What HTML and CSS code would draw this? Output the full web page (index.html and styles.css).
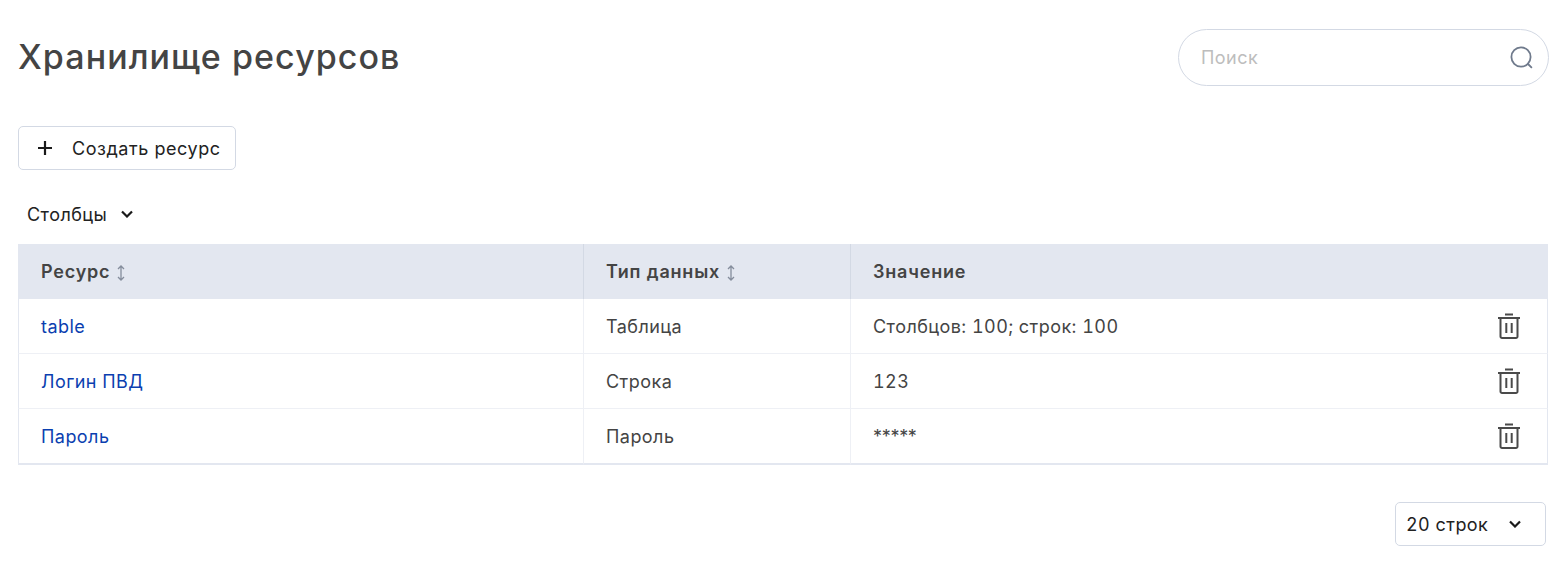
FILE: index.html
```html
<!DOCTYPE html>
<html lang="ru">
<head>
    <meta charset="UTF-8">
    <title>Хранилище ресурсов</title>
    <link rel="stylesheet" href="styles.css">
</head>
<body>
    <header class="page-header">
        <h1>Хранилище ресурсов</h1>
        <div class="search">
            <span class="search-placeholder">Поиск</span>
            <svg class="search-icon" width="26" height="26" viewBox="0 0 26 26" fill="none" stroke="#6f7a8c" stroke-width="1.8" stroke-linecap="round">
                <circle cx="12" cy="12" r="9.6"/>
                <path d="M19 19l3.4 3.4"/>
            </svg>
        </div>
    </header>

    <button class="create-btn">
        <svg width="16" height="16" viewBox="0 0 16 16" stroke="#1a1a1a" stroke-width="2.2">
            <path d="M8 1v14M1 8h14"/>
        </svg>
        <span>Создать ресурс</span>
    </button>

    <div class="columns-toggle">
        <span>Столбцы</span>
        <svg class="chevron" width="12" height="8" viewBox="0 0 12 8" fill="none" stroke="#1a1a1a" stroke-width="2.2">
            <path d="M1 1.500L6 6.500l5-5"/>
        </svg>
    </div>

    <table class="resources">
        <thead>
            <tr>
                <th class="col-name">Ресурс
                    <svg class="sort" width="10" height="16" viewBox="0 0 10 16" fill="none" stroke="#858d9c" stroke-width="1.300"><path d="M5 1v14M2 4l3-3 3 3M2 12l3 3 3-3"/></svg>
                </th>
                <th class="col-type">Тип данных
                    <svg class="sort" width="10" height="16" viewBox="0 0 10 16" fill="none" stroke="#858d9c" stroke-width="1.300"><path d="M5 1v14M2 4l3-3 3 3M2 12l3 3 3-3"/></svg>
                </th>
                <th>Значение</th>
            </tr>
        </thead>
        <tbody>
            <tr>
                <td><a href="#">table</a></td>
                <td>Таблица</td>
                <td>
                    <div class="value-cell">
                        <span>Столбцов: 100; строк: 100</span>
                        <svg class="trash" width="22" height="26" viewBox="0 0 22 26" fill="none" stroke="#4a4a4a" stroke-width="2"><path d="M7 1.500h8M0 5h22M2.500 5v18.500a1.500 1.500 0 0 0 1.500 1.500h14a1.500 1.500 0 0 0 1.500-1.500V5M8.300 10v10M13.700 10v10"/></svg>
                    </div>
                </td>
            </tr>
            <tr>
                <td><a href="#">Логин ПВД</a></td>
                <td>Строка</td>
                <td>
                    <div class="value-cell">
                        <span>123</span>
                        <svg class="trash" width="22" height="26" viewBox="0 0 22 26" fill="none" stroke="#4a4a4a" stroke-width="2"><path d="M7 1.500h8M0 5h22M2.500 5v18.500a1.500 1.500 0 0 0 1.500 1.500h14a1.500 1.500 0 0 0 1.500-1.500V5M8.300 10v10M13.700 10v10"/></svg>
                    </div>
                </td>
            </tr>
            <tr>
                <td><a href="#">Пароль</a></td>
                <td>Пароль</td>
                <td>
                    <div class="value-cell">
                        <span class="masked">*****</span>
                        <svg class="trash" width="22" height="26" viewBox="0 0 22 26" fill="none" stroke="#4a4a4a" stroke-width="2"><path d="M7 1.500h8M0 5h22M2.500 5v18.500a1.500 1.500 0 0 0 1.500 1.500h14a1.500 1.500 0 0 0 1.500-1.500V5M8.300 10v10M13.700 10v10"/></svg>
                    </div>
                </td>
            </tr>
        </tbody>
    </table>

    <div class="pager">
        <div class="rows-select">
            <span>20 строк</span>
            <svg class="chevron" width="12" height="8" viewBox="0 0 12 8" fill="none" stroke="#1a1a1a" stroke-width="2.2">
                <path d="M1 1.500L6 6.500l5-5"/>
            </svg>
        </div>
    </div>
</body>
</html>
```

FILE: styles.css
```css
body {
    margin: 0;
    padding: 29px 14px 0 18px;
    font-family: Inter, 'Noto Sans', sans-serif;
    font-size: 18px;
    letter-spacing: 0.45px;
    font-variant-numeric: tabular-nums;
    color: #444444;
    background-color: #ffffff;
}

.page-header {
    display: flex;
    justify-content: space-between;
    align-items: center;
    height: 57px;
}

h1 {
    margin: 0 0 2px;
    font-size: 34px;
    font-weight: 500;
    letter-spacing: 1.05px;
    color: #444444;
}

.search {
    display: flex;
    justify-content: space-between;
    align-items: center;
    box-sizing: border-box;
    width: 371px;
    height: 57px;
    padding: 0 13px 0 22px;
    border: 1px solid #d3d9e4;
    border-radius: 29px;
}

.search-placeholder {
    color: #bdbdbd;
}

.create-btn {
    display: flex;
    align-items: center;
    gap: 19px;
    box-sizing: border-box;
    width: 218px;
    height: 44px;
    margin-top: 40px;
    padding: 0 0 0 18px;
    border: 1px solid #d3d9e4;
    border-radius: 5px;
    background-color: #ffffff;
    font-family: inherit;
    font-size: 18px;
    letter-spacing: 0.55px;
    color: #222222;
}

.columns-toggle {
    display: flex;
    align-items: center;
    gap: 14px;
    height: 28px;
    margin-top: 30px;
    padding-left: 9px;
    color: #222222;
}

.resources {
    width: 1530px;
    margin-top: 16px;
    border-collapse: separate;
    border-spacing: 0;
    table-layout: fixed;
}

.col-name {
    width: 565px;
}

.col-type {
    width: 267px;
}

.resources th {
    height: 55px;
    box-sizing: border-box;
    padding: 0 23px 0 22px;
    background-color: #e3e7f0;
    border-left: 1px solid #d3d9e4;
    text-align: left;
    font-weight: 600;
    letter-spacing: 0.8px;
    color: #444444;
}

.resources th:first-child {
    border-left: none;
    padding-left: 23px;
}

.sort {
    vertical-align: -3px;
}

.resources td {
    height: 55px;
    box-sizing: border-box;
    padding: 0 27px 0 22px;
    border-left: 1px solid #eef0f5;
    border-bottom: 1px solid #eef0f5;
}

.resources td:first-child {
    border-left: 1px solid #e3e7f0;
}

.resources td:last-child {
    border-right: 1px solid #e3e7f0;
}

.resources tr:last-child td {
    height: 56px;
    border-bottom: 2px solid #e3e7f0;
}

.resources a {
    color: #0b3fb0;
    text-decoration: none;
}

.value-cell {
    display: flex;
    justify-content: space-between;
    align-items: center;
}

.masked {
    font-variant-numeric: normal;
    letter-spacing: -0.3px;
}

.pager {
    display: flex;
    justify-content: flex-end;
    margin-top: 37px;
    padding-right: 3px;
}

.rows-select {
    display: flex;
    justify-content: space-between;
    align-items: center;
    box-sizing: border-box;
    width: 151px;
    height: 44px;
    padding: 0 24px 0 10px;
    border: 1px solid #d3d9e4;
    border-radius: 5px;
    color: #222222;
}
```
